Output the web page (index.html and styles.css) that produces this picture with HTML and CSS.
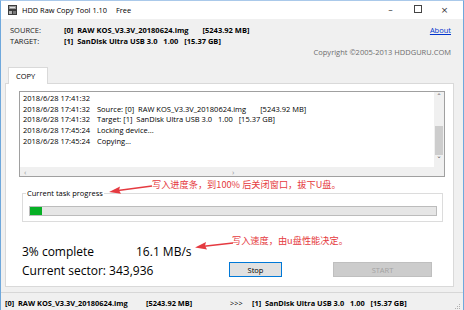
FILE: index.html
```html
<!DOCTYPE html>
<html lang="zh-CN">
<head>
    <meta charset="UTF-8">
    <title>HDD Raw Copy Tool 1.10</title>
    <link rel="stylesheet" href="styles.css">
</head>
<body>
    <div class="window">
        <div class="titlebar">
            <svg class="app-icon" width="9" height="10" viewBox="0 0 9 10">
                <rect x="0" y="0" width="9" height="10" fill="#3c3c3c"/>
                <rect x="1" y="1" width="7" height="3" fill="#9a9a9a"/>
                <rect x="2" y="2" width="5" height="1" fill="#e0e0e0"/>
                <rect x="1" y="6" width="3" height="3" fill="#b5b5b5"/>
                <rect x="5" y="6" width="3" height="3" fill="#7a7a7a"/>
            </svg>
            <span class="title">HDD Raw Copy Tool 1.10</span>
            <span class="edition">Free</span>
            <div class="controls">
                <span class="ctl">&#8211;</span>
                <span class="ctl ctl-max"></span>
                <span class="ctl">&#215;</span>
            </div>
        </div>

        <div class="info">
            <div class="info-row">
                <span class="label">SOURCE:</span>
                <b class="dev">[0]&nbsp; RAW KOS_V3.3V_20180624.img</b>
                <b class="size">[5243.92 MB]</b>
                <a class="about" href="#">About</a>
            </div>
            <div class="info-row">
                <span class="label">TARGET:</span>
                <b class="dev">[1]&nbsp; SanDisk Ultra USB 3.0 &nbsp; 1.00 &nbsp; [15.37 GB]</b>
            </div>
            <div class="copyright">Copyright ©2005-2013 HDDGURU.COM</div>
        </div>

        <div class="tabs">
            <div class="tab">COPY</div>
        </div>

        <div class="panel">
            <div class="log">
                <div class="log-main">
                    <div class="log-lines">
                        <div><span class="ts">2018/6/28 17:41:32</span></div>
                        <div><span class="ts">2018/6/28 17:41:32</span><span class="msg">Source: [0]&nbsp; RAW KOS_V3.3V_20180624.img</span><span class="msg-size">[5243.92 MB]</span></div>
                        <div><span class="ts">2018/6/28 17:41:32</span><span class="msg">Target: [1]&nbsp; SanDisk Ultra USB 3.0 &nbsp; 1.00 &nbsp; [15.37 GB]</span></div>
                        <div><span class="ts">2018/6/28 17:45:24</span><span class="msg">Locking device...</span></div>
                        <div><span class="ts">2018/6/28 17:45:24</span><span class="msg">Copying...</span></div>
                    </div>
                    <div class="vscroll">
                        <span class="arrow">&#710;</span>
                        <div class="track"><div class="thumb"></div></div>
                        <span class="arrow down">&#711;</span>
                    </div>
                </div>
                <div class="hscroll">
                    <span class="arrow">&#8249;</span>
                    <span class="arrow">&#8250;</span>
                    <span class="corner"></span>
                </div>
            </div>

            <fieldset class="progress-group">
                <legend>Current task progress</legend>
                <div class="bar"><div class="fill" style="width: 3%"></div></div>
            </fieldset>

            <div class="stats">
                <span class="pct">3% complete</span>
                <span class="speed">16.1 MB/s</span>
                <span class="sector">Current sector: 343,936</span>
                <button class="btn btn-stop">Stop</button>
                <button class="btn btn-start" disabled>START</button>
            </div>
        </div>

        <div class="statusbar">
            <span class="sb-dev">[0]&nbsp; RAW KOS_V3.3V_20180624.img</span>
            <span class="sb-size">[5243.92 MB]</span>
            <span class="sb-sep">&gt;&gt;&gt;</span>
            <span class="sb-target">[1]&nbsp; SanDisk Ultra USB 3.0 &nbsp; 1.00 &nbsp; [15.37 GB]</span>
            <svg class="grip" width="8" height="8" viewBox="0 0 8 8">
                <rect x="6" y="2" width="1" height="1" fill="#b0b0b0"/>
                <rect x="4" y="4" width="1" height="1" fill="#b0b0b0"/>
                <rect x="6" y="4" width="1" height="1" fill="#b0b0b0"/>
                <rect x="2" y="6" width="1" height="1" fill="#b0b0b0"/>
                <rect x="4" y="6" width="1" height="1" fill="#b0b0b0"/>
                <rect x="6" y="6" width="1" height="1" fill="#b0b0b0"/>
            </svg>
        </div>

        <!-- annotations drawn over the screenshot -->
        <svg class="notes" width="464" height="310" viewBox="0 0 464 310">
            <path d="M152 186 L118 190.5" stroke="#e53a40" stroke-width="1.6" fill="none"/>
            <path d="M109 192 L120 186.5 L119 190.2 L121 193.8 Z" fill="#e53a40"/>
            <path d="M233 243 L204 246.3" stroke="#e53a40" stroke-width="1.6" fill="none"/>
            <path d="M195 247.5 L206 242 L205 245.8 L207 249.5 Z" fill="#e53a40"/>
        </svg>
        <span class="note note-progress">写入进度条，到100% 后关闭窗口，拔下U盘。</span>
        <span class="note note-speed">写入速度，由u盘性能决定。</span>
    </div>
</body>
</html>
```

FILE: styles.css
```css
* {
    box-sizing: border-box;
}
body {
    margin: 0;
    font-family: "Open Sans", "Noto Sans", sans-serif;
    color: #000;
}
.window {
    position: relative;
    width: 464px;
    height: 310px;
    background-color: #f0f0f0;
    border-top: 1px solid #aac9ea;
    border-left: 1px solid #6fa8dc;
    border-right: 1px solid #6fa8dc;
    display: flex;
    flex-direction: column;
    overflow: hidden;
    font-size: 7.5px;
}

/* title bar */
.titlebar {
    height: 18px;
    flex: none;
    background-color: #fff;
    display: flex;
    align-items: center;
    padding-left: 7px;
    font-size: 7.4px;
}
.app-icon {
    margin-right: 5px;
}
.edition {
    margin-left: 9px;
}
.controls {
    margin-left: auto;
    display: flex;
    padding-right: 5px;
}
.ctl {
    width: 27px;
    text-align: center;
    font-size: 9px;
    color: #333;
    font-family: "DejaVu Sans", sans-serif;
}
.ctl-max::before {
    content: "";
    display: inline-block;
    width: 6px;
    height: 6px;
    border: 1px solid #444;
}

/* source / target */
.info {
    flex: none;
    padding: 6px 12px 0 9px;
    line-height: 11px;
}
.info-row {
    display: flex;
}
.label {
    width: 54px;
    color: #222;
}
.dev {
    font-weight: bold;
}
.size {
    font-weight: bold;
    margin-left: 14px;
}
.about {
    margin-left: auto;
    color: #0033cc;
    text-decoration: underline;
}
.copyright {
    text-align: right;
    color: #6d6d6d;
}

/* tab */
.tabs {
    flex: none;
    display: flex;
    padding-left: 7px;
    margin-top: 9px;
}
.tab {
    position: relative;
    z-index: 1;
    width: 40px;
    height: 17px;
    margin-bottom: -1px;
    padding: 3px 0 0 7px;
    background-color: #fff;
    border: 1px solid #d9d9d9;
    border-bottom: none;
    font-size: 7.5px;
}
.panel {
    height: 204px;
    flex: none;
    margin: 0 9px 0 4px;
    background-color: #fff;
    border: 1px solid #d9d9d9;
    padding: 7px 8px 0 13px;
}

/* log */
.log {
    height: 86px;
    border: 1px solid #a0a0a0;
    display: flex;
    flex-direction: column;
}
.log-main {
    flex: 1;
    display: flex;
    min-height: 0;
}
.log-lines {
    flex: 1;
    padding: 1px 0 0 3px;
    line-height: 10.7px;
    white-space: nowrap;
    overflow: hidden;
}
.ts {
    display: inline-block;
    width: 74px;
}
.msg {
    white-space: pre;
}
.msg-size {
    margin-left: 14px;
}
.vscroll {
    width: 10px;
    background-color: #f0f0f0;
    display: flex;
    flex-direction: column;
    align-items: center;
}
.vscroll .arrow {
    height: 10px;
    line-height: 12px;
    font-size: 9px;
    color: #606060;
    font-family: "DejaVu Sans", sans-serif;
}
.vscroll .arrow.down {
    line-height: 8px;
}
.track {
    flex: 1;
    width: 100%;
    padding-top: 24px;
}
.thumb {
    height: 29px;
    margin: 0 1px;
    background-color: #cdcdcd;
}
.hscroll {
    height: 9px;
    background-color: #f0f0f0;
    display: flex;
    align-items: center;
    justify-content: space-between;
    padding-left: 4px;
    font-size: 8px;
    color: #9a9a9a;
    line-height: 9px;
}
.corner {
    width: 10px;
    height: 9px;
    margin-left: -6px;
    background-color: #f0f0f0;
}

/* progress */
.progress-group {
    margin: 11px 2px 0 3px;
    padding: 0 5px 5px 3px;
    border: 1px solid #dcdcdc;
}
.progress-group legend {
    padding: 0 1px;
    line-height: 10px;
    font-size: 7.5px;
}
.bar {
    height: 10px;
    margin: 8px 0 0 3px;
    background-color: #e6e6e6;
    border: 1px solid #bcbcbc;
}
.fill {
    height: 100%;
    background-color: #06b025;
}

/* stats + buttons */
.stats {
    margin-top: 20px;
    display: grid;
    grid-template-columns: 114px 93px 53px 51px 99px;
    grid-template-rows: 19px 19px;
    font-size: 12px;
    line-height: 19px;
    margin-left: 3px;
}
.pct {
    grid-column: 1;
}
.speed {
    grid-column: 2 / 4;
}
.sector {
    grid-row: 2;
    grid-column: 1 / 3;
}
.btn {
    grid-row: 2;
    height: 15px;
    margin-top: 1px;
    padding: 0;
    font-family: "Open Sans", sans-serif;
    font-size: 7.5px;
}
.btn-stop {
    grid-column: 3;
    background-color: #e1e1e1;
    border: 1px solid #0078d7;
}
.btn-start {
    grid-column: 5;
    background-color: #cccccc;
    border: 1px solid #bfbfbf;
    color: #a3a3a3;
}

/* status bar */
.statusbar {
    flex: 1;
    margin-top: 5px;
    border-top: 1px solid #d7d7d7;
    display: flex;
    align-items: center;
    padding: 3px 0 0 4px;
    font-size: 7.4px;
    font-weight: bold;
    white-space: nowrap;
}
.sb-dev {
    width: 141px;
}
.sb-size {
    width: 84px;
}
.sb-sep {
    width: 22px;
    font-weight: normal;
}
.grip {
    margin-left: auto;
    margin-right: 2px;
    align-self: flex-end;
}

/* red annotations */
.notes {
    position: absolute;
    left: -1px;
    top: -1px;
    pointer-events: none;
}
.note {
    position: absolute;
    font-family: "Noto Sans CJK SC", sans-serif;
    font-size: 9.2px;
    line-height: 12px;
    color: #e53a40;
    white-space: nowrap;
}
.note-progress {
    left: 151px;
    top: 177px;
}
.note-speed {
    left: 231px;
    top: 233px;
}
```
